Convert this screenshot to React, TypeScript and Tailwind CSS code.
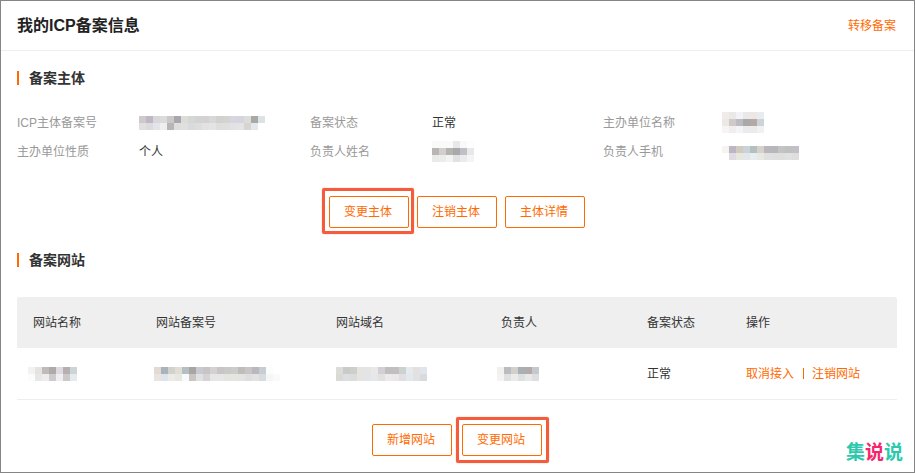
const r = (s: string) => s.split(" ");

type MosaicProps = { rows: string[][]; className?: string };

// blurred-out private values, 7px squares
function Mosaic({ rows, className }: MosaicProps) {
  return (
    <div className={"flex flex-col " + (className ?? "")}>
      {rows.map((row, i) => (
        <div key={i} className="flex h-[7px]">
          {row.map((c, j) => (
            <div key={j} className="h-[7px] w-[7px]" style={{ background: "#" + c }} />
          ))}
        </div>
      ))}
    </div>
  );
}

const icpNo = [
  r("cfc9c9 bdb8c3 d9d7d9 dbdbdb cbc9c7 aaa6ae dcdcd8 d6d7d3 d3d3d3 d3d1d1 d8d8d8 d1d1cd d5d2d2 d6d6de d6d5db dcdcdc aaa8a4 dce3e7"),
  r("e4dfdf dcdadc e3e3e9 efefef b9b5b7 dededc e0e0e0 d7dbe0 dddddd e2e2e2 e4e4e4 dededa dfdfdf e2e2e6 e4e4e6 d8d4d0 e3e8ec ffffff"),
];
const holderName = [
  r("f1ecea e9e9e7 f3f3f5 e9e9e9 ece6e4 e8ecef"),
  r("ece8e6 cfc9cb bbbbc0 a9a9a9 b5a9a3 ccd4da"),
  r("f6f5f3 f0eeee f3f4f7 ebebeb ebebeb f0f1f3"),
];
const personName = [
  r("fafafa fafafa fafafa e8e8e8 f9f9f9 fdfdfd"),
  r("b9b5b5 cfcfcf b5b3ad a9a9ad bfbfc7 e8e8e8"),
  r("eaeaea ececec f3f3f3 e1e1e1 ebebeb f4f4f4"),
];
const phone = [
  r("f5f4f0 bdb5c3 cfcbbf c9d4da b4bfbf d6d2ca b9b7bd b7b7bb c3c3c3 bfc1c1 c3bfc9"),
  r("ffffff e0dae2 e7e7df e3e7e7 e7edf0 e8e8e4 e0e0e0 dfdfdf dfdfdf e1e1e1 dedede"),
];
const siteName = [
  r("f5f1ef e3e3e1 bfbbbb aeaaaa dedae2 b5afaf ccd4d6"),
  r("fdfcfc e7e7e7 eeecec cfcbcd f0eef2 cdc9c7 e4eaed"),
];
const siteNo = [
  r("e3dad5 a9b3bb d2d2cc e3dcd5 b3bfc5 a8a6a2 c9c9cf c7c3c7 d3d1d1 c7c5c5 c9c9c9 ccccc8 c0bcbc c9c5c7 bbb7bf c7cdd1 fbfdfd ffffff"),
  r("e9e4e0 dfe4ea ecebe5 e6e6e2 f7f9fb c9c5c3 e1e1e5 d4d4d6 e6e6e6 e6e6e6 e4e4e0 e4e4e0 e4e2e2 dedede e2e2e2 d9dcde f5f7f7 fafafa"),
];
const domain = [
  r("dcdcd8 c7cbc9 cfcfc9 e6e4e2 e4e4e2 e8e8e8 d3cfd5 c0bebe c1bfbf cdd1d1 e6eaee e3e1dd e1e4ec"),
  r("d9dad6 dcdfe1 dbdcde e7e3e1 e1e5e7 e7e7e9 e1e1e1 ecebeb ebe8e8 e1dfe1 e3e8ec dfe1e3 d9dade"),
];
const owner = [
  r("f1f0ec b9bdc1 d3cfcb a9afb3 b3aba9 c5c9cb"),
  r("f3f3f1 e0e0e2 ebebe9 dce0e2 e8e8e8 dcdee0"),
];

function SectionTitle({ children }: { children: string }) {
  return (
    <div className="flex h-[14px] items-center border-l-2 border-[#ff6a00] pl-[10px] text-[14px] font-semibold leading-[14px] text-[#333]">
      {children}
    </div>
  );
}

function Btn({ children, mark }: { children: string; mark?: string }) {
  return (
    <button className="relative flex h-8 w-20 items-center justify-center rounded-[2px] border border-[#ff6a00] bg-white pr-0.5 text-[12px] text-[#ff6a00]">
      {children}
      {mark && (
        <span
          className={"absolute rounded-[2px] border-[3px] border-[#f55c3c] shadow-[0_0_1px_#f55c3c] " + mark}
        />
      )}
    </button>
  );
}

function Info({ label, children, w }: { label: string; children: React.ReactNode; w: string }) {
  return (
    <div className="flex h-[29px] items-center">
      <span className={"shrink-0 text-[12px] text-[#999] " + w}>{label}</span>
      {children}
    </div>
  );
}

export default function App() {
  return (
    <div
      className="relative h-[473px] w-[915px] overflow-hidden border border-[#858585] bg-white"
      style={{ fontFamily: '"Liberation Sans", "Noto Sans CJK SC", sans-serif' }}
    >
      <div className="flex h-[50px] items-center justify-between border-b border-[#eee] pl-4 pr-[18px]">
        <h1 className="text-[16px] font-semibold text-[#222]">我的ICP备案信息</h1>
        <a className="text-[12px] text-[#ff6a00]">转移备案</a>
      </div>

      <div className="pl-4 pr-[17px]">
        <div className="pt-[20px]">
          <SectionTitle>备案主体</SectionTitle>
        </div>

        <div className="mt-[23px] grid grid-cols-[293px_293px_1fr]">
          <Info label="ICP主体备案号" w="w-[122px]">
            <Mosaic rows={icpNo} className="mt-px" />
          </Info>
          <Info label="备案状态" w="w-[122px]">
            <span className="text-[12px] text-[#333]">正常</span>
          </Info>
          <Info label="主办单位名称" w="w-[119px]">
            <Mosaic rows={holderName} />
          </Info>
          <Info label="主办单位性质" w="w-[122px]">
            <span className="text-[12px] text-[#333]">个人</span>
          </Info>
          <Info label="负责人姓名" w="w-[122px]">
            <Mosaic rows={personName} />
          </Info>
          <Info label="负责人手机" w="w-[119px]">
            <Mosaic rows={phone} className="mt-[3px]" />
          </Info>
        </div>

        <div className="mt-[30px] flex justify-center gap-2">
          <Btn mark="-left-[8px] -top-[9px] -right-[6px] -bottom-[7px]">变更主体</Btn>
          <Btn>注销主体</Btn>
          <Btn>主体详情</Btn>
        </div>

        <div className="mt-[25px]">
          <SectionTitle>备案网站</SectionTitle>
        </div>

        <div className="mt-[30px]">
          <div className="flex h-[51px] items-center rounded-t-[2px] bg-[#efefef] text-[12px] text-[#333]">
            <span className="w-[139px] pl-4">网站名称</span>
            <span className="w-[180px]">网站备案号</span>
            <span className="w-[165px]">网站域名</span>
            <span className="w-[146px]">负责人</span>
            <span className="w-[99px]">备案状态</span>
            <span>操作</span>
          </div>
          <div className="flex h-[52px] items-center border-b border-[#eee] text-[12px] text-[#333]">
            <div className="w-[137px] pl-[11px]">
              <Mosaic rows={siteName} />
            </div>
            <div className="w-[182px]">
              <Mosaic rows={siteNo} />
            </div>
            <div className="w-[161px]">
              <Mosaic rows={domain} />
            </div>
            <div className="w-[150px]">
              <Mosaic rows={owner} />
            </div>
            <span className="w-[99px]">正常</span>
            <span className="flex items-center text-[#ff6a00]">
              取消接入
              <span className="ml-[9px] mr-[8px] h-[11px] w-px bg-[#ff6a00]" />
              注销网站
            </span>
          </div>
        </div>

        <div className="mt-6 flex justify-center gap-[10px]">
          <Btn>新增网站</Btn>
          <Btn mark="-left-[7px] -top-[8px] -right-[8px] -bottom-[8px]">变更网站</Btn>
        </div>
      </div>

      <div className="absolute bottom-[8px] right-[11px] text-[19px] font-bold leading-[22px] text-[#2cc9ad]">
        集<span className="text-[#f5256c]">说</span>说
      </div>
    </div>
  );
}
